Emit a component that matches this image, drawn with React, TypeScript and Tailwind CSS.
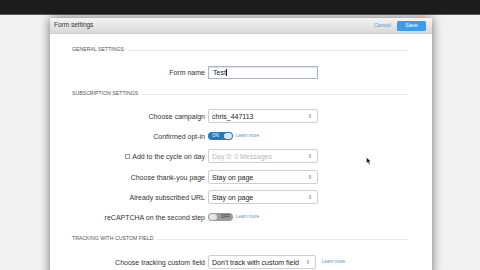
import React from "react";

const font = { fontFamily: '"Liberation Sans", Arial, sans-serif' };

function Arrows() {
  return (
    <svg width="4" height="6" viewBox="0 0 4 6" className="shrink-0">
      <path d="M0.5 2.4 L2 0.8 L3.5 2.4 Z" fill="#9a9a9a" />
      <path d="M0.5 3.6 L2 5.2 L3.5 3.6 Z" fill="#9a9a9a" />
    </svg>
  );
}

function Select({ value, disabled, w = "w-[110px]" }: { value: string; disabled?: boolean; w?: string }) {
  return (
    <div
      className={`${w} h-[14px] border border-[#cfcfcf] rounded-[2px] bg-white flex items-center justify-between pl-[3px] pr-[5px] text-[7px] ${
        disabled ? "text-[#b8b8b8]" : "text-[#222]"
      }`}
    >
      <span className="leading-none">{value}</span>
      <Arrows />
    </div>
  );
}

function Learn({ extra = "" }: { extra?: string }) {
  return <span className={`flex items-center text-[4.5px] text-[#4f97c7] leading-none ${extra}`}>Learn more</span>;
}

function SectionHeader({ text }: { text: string }) {
  return (
    <div className="flex items-center h-[6px]">
      <span className="text-[5.2px] text-[#555] uppercase leading-none whitespace-nowrap">{text}</span>
      <div className="flex-1 h-px bg-[#e9e9e9] ml-[4px]" />
    </div>
  );
}

function Row({ label, children, mt, pre }: { label: string; children: React.ReactNode; mt: string; pre?: React.ReactNode }) {
  return (
    <div className={`flex items-center h-[14px] ${mt}`}>
      <div className="w-[133px] flex items-center justify-end text-[7px] text-[#333] leading-none whitespace-nowrap">
        {pre}
        {label}
      </div>
      <div className="ml-[3px] h-[14px] flex items-center gap-[3px]">{children}</div>
    </div>
  );
}

export default function App() {
  return (
    <div className="w-[480px] h-[270px] bg-[#f2f2f2] overflow-hidden relative" style={font}>
      <div className="h-[15px] bg-[#1d1d1d] border-b border-[#5a5a5a]" />
      <div className="ml-[50px] mt-[3px] w-[382px] h-[260px] bg-white shadow-[0_0_10px_rgba(0,0,0,0.55)]">
        <div className="h-[16px] bg-gradient-to-b from-[#f4f4f4] to-[#d8d8d8] border-b border-[#cfcfcf] flex items-center justify-between pl-[4px] pr-[6px]">
          <span className="text-[6.5px] text-[#333] leading-none">Form settings</span>
          <div className="flex items-center gap-[6px]">
            <span className="text-[5.5px] text-[#5b9bd5] leading-none">Cancel</span>
            <div className="w-[29px] h-[10px] bg-[#3c9ce8] rounded-[1.5px] flex items-center justify-center text-[5.5px] text-white leading-none">
              Save
            </div>
          </div>
        </div>
        <div className="pl-[22px] pr-[24px] pt-[13px]">
          <SectionHeader text="General settings" />
          <div className="flex items-center h-[13px] mt-[13px]">
            <div className="w-[133px] text-right text-[7px] text-[#333] leading-none">Form name</div>
            <div className="ml-[3px] w-[110px] h-[13px] border border-[#a8b6c6] shadow-[inset_0_1px_1px_rgba(0,0,0,0.12)] bg-white flex items-center pl-[4px] text-[7px] text-[#222] leading-none">
              Test
              <span className="w-px h-[7px] bg-[#222] ml-[0.5px]" />
            </div>
          </div>
          <div className="mt-[12px]">
            <SectionHeader text="Subscription settings" />
          </div>
          <Row label="Choose campaign" mt="mt-[12px]">
            <Select value="chris_447113" />
          </Row>
          <Row label="Confirmed opt-in" mt="mt-[6px]">
            <div className="w-[25px] h-[8px] rounded-full bg-[#2b78b6] flex items-center justify-between pl-[4px] pr-[1px]">
              <span className="text-[4.5px] text-white leading-none">ON</span>
              <span className="w-[8px] h-[6px] rounded-full bg-[#e6e6e6]" />
            </div>
            <Learn />
          </Row>
          <Row
            label="Add to the cycle on day"
            mt="mt-[6px]"
            pre={<span className="w-[5px] h-[5px] border border-[#999] bg-white mr-[2px] rounded-[0.5px]" />}
          >
            <Select value="Day 0: 0 Messages" disabled />
          </Row>
          <Row label="Choose thank-you page" mt="mt-[7px]">
            <Select value="Stay on page" />
          </Row>
          <Row label="Already subscribed URL" mt="mt-[6px]">
            <Select value="Stay on page" />
          </Row>
          <Row label="reCAPTCHA on the second step" mt="mt-[6px]">
            <div className="w-[25px] h-[8px] rounded-full bg-[#9c9c9c] flex items-center justify-between pl-[1px] pr-[3px]">
              <span className="w-[8px] h-[6px] rounded-full bg-[#e4e4e4]" />
              <span className="text-[4.5px] text-[#333] leading-none">OFF</span>
            </div>
            <Learn />
          </Row>
          <div className="mt-[12px]">
            <SectionHeader text="Tracking with custom field" />
          </div>
          <Row label="Choose tracking custom field" mt="mt-[13px]">
            <Select value="Don't track with custom field" w="w-[108px]" />
            <Learn extra="ml-[3px]" />
          </Row>
        </div>
      </div>
      <svg className="absolute left-[366px] top-[157px]" width="6" height="8" viewBox="0 0 6 8">
        <path d="M0.5 0.5 L0.5 6.5 L2 5 L3.2 7.5 L4.2 7 L3 4.6 L5 4.6 Z" fill="#111" stroke="#fff" strokeWidth="0.4" />
      </svg>
    </div>
  );
}
